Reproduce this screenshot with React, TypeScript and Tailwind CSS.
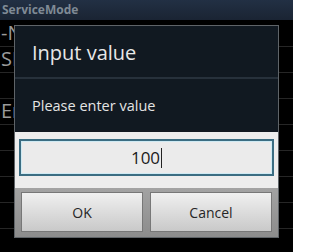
import React from "react";

const bgRows = ["-N", "SR", "", "En", "", "", "", "", ""];

export default function App() {
  return (
    <div className="relative w-[293px] h-[252px] overflow-hidden bg-black font-['Open_Sans',sans-serif]">
      {/* Title bar */}
      <div className="h-[21px] bg-gradient-to-b from-[#223044] to-[#1a2433] border-b border-black px-[2px] text-[12px] font-bold leading-[20px] text-[#7f8a95]">
        ServiceMode
      </div>

      {/* Background list behind the dialog */}
      <div className="flex flex-col">
        {bgRows.map((row, i) => (
          <div
            key={i}
            className="h-[26px] border-b border-[#262626] pl-[1px] text-[20px] leading-[24px] text-[#9a9a9a] overflow-hidden whitespace-nowrap"
          >
            {row}
          </div>
        ))}
      </div>

      {/* Dialog */}
      <div className="absolute left-[14px] top-[25px] w-[265px] h-[213px] border border-[#5f6468] bg-[#111921] flex flex-col">
        <div className="h-[51px] flex items-center pl-[17px] pt-[2px] text-[20px] text-[#e8e8e8]">
          Input value
        </div>
        <div className="h-[2px] bg-[#27313b]" />
        <div className="h-[53px] flex items-center pl-[17px] text-[14.5px] text-[#e4e4e4]">
          Please enter value
        </div>
        <div className="h-[56px] bg-[#ededed] px-[4px] pt-[7px]">
          <div className="h-[37px] border-2 border-[#3b6d82] bg-[#ebebeb] shadow-[inset_0_0_0_1px_#cfeaf3] flex items-center justify-center text-[17px] text-[#1a1a1a]">
            <span>100</span>
            <span className="ml-[1px] w-[1px] h-[20px] bg-[#222]" />
          </div>
        </div>
        <div className="flex-1 bg-gradient-to-b from-[#a3a3a3] to-[#8c8c8c] flex gap-[7px] px-[6px] pt-[4px] pb-[5px]">
          <button className="flex-1 border border-[#777] bg-gradient-to-b from-[#f0f0f0] to-[#c9c9c9] text-[14px] text-[#262626]">
            OK
          </button>
          <button className="flex-1 border border-[#777] bg-gradient-to-b from-[#f0f0f0] to-[#c9c9c9] text-[14px] text-[#262626]">
            Cancel
          </button>
        </div>
      </div>
    </div>
  );
}
